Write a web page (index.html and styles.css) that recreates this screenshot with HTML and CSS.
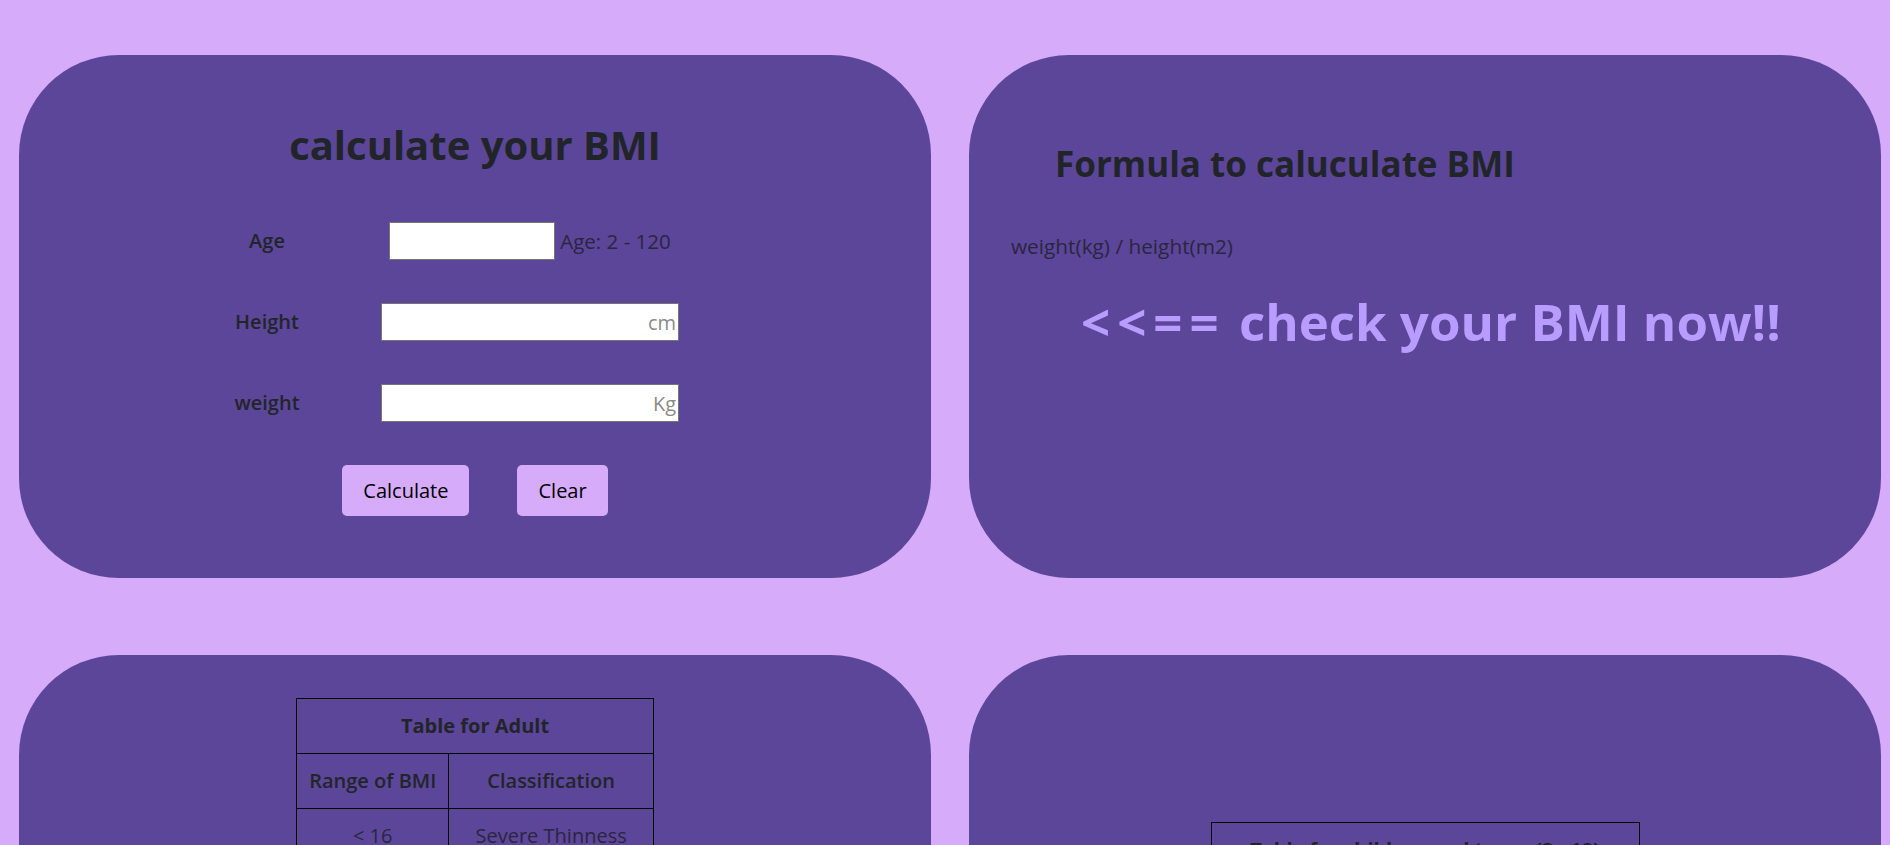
FILE: index.html
```html
<!DOCTYPE html>
<html lang="en">
<head>
<meta charset="utf-8">
<title>BMI Calculator</title>
<link rel="stylesheet" href="styles.css">
</head>
<body>
<main class="page">
  <section class="card calc-card">
    <h1 class="calc-title">calculate your BMI</h1>
    <form class="calc-form">
      <label class="field-label" for="age">Age</label>
      <div class="field">
        <input class="input input-age" id="age" type="text">
        <span class="hint">Age: 2 - 120</span>
      </div>
      <label class="field-label" for="height">Height</label>
      <div class="field">
        <input class="input input-wide" id="height" type="text" placeholder="cm">
      </div>
      <label class="field-label" for="weight">weight</label>
      <div class="field">
        <input class="input input-wide" id="weight" type="text" placeholder="Kg">
      </div>
    </form>
    <div class="actions">
      <button class="btn" type="button">Calculate</button>
      <button class="btn" type="button">Clear</button>
    </div>
  </section>

  <section class="card formula-card">
    <h2 class="formula-title">Formula to caluculate BMI</h2>
    <p class="formula-text">weight(kg) / height(m2)</p>
    <p class="cta"><span class="cta-arrow">&lt;&lt;==</span> check your BMI now!!</p>
  </section>

  <section class="card table-card adult-card">
    <table class="bmi-table">
      <thead>
        <tr><th colspan="2" class="table-caption">Table for Adult</th></tr>
        <tr><th>Range of BMI</th><th>Classification</th></tr>
      </thead>
      <tbody>
        <tr><td>&lt; 16</td><td>Severe Thinness</td></tr>
        <tr><td>16 - 17</td><td>Moderate Thinness</td></tr>
        <tr><td>17 - 18.5</td><td>Mild Thinness</td></tr>
        <tr><td>18.5 - 25</td><td>Normal</td></tr>
        <tr><td>25 - 30</td><td>Overweight</td></tr>
        <tr><td>30 - 35</td><td>Obese Class I</td></tr>
        <tr><td>35 - 40</td><td>Obese Class II</td></tr>
        <tr><td>&gt; 40</td><td>Obese Class III</td></tr>
      </tbody>
    </table>
  </section>

  <section class="card table-card child-card">
    <table class="bmi-table child-table">
      <thead>
        <tr><th colspan="2" class="table-caption">Table for children and teens (2 - 19)</th></tr>
        <tr><th>Category</th><th>Percentile Range</th></tr>
      </thead>
      <tbody>
        <tr><td>Underweight</td><td>&lt; 5%</td></tr>
        <tr><td>Healthy weight</td><td>5% - 85%</td></tr>
        <tr><td>At risk of overweight</td><td>85% - 95%</td></tr>
        <tr><td>Overweight</td><td>&gt; 95%</td></tr>
      </tbody>
    </table>
  </section>
</main>
</body>
</html>
```

FILE: styles.css
```css
* { box-sizing: border-box; }

html, body {
  margin: 0;
  background: #d5abfa;
  color: #212529;
  font-family: "Open Sans", "Noto Sans", sans-serif;
}

.page {
  display: grid;
  grid-template-columns: 912px 912px;
  column-gap: 38px;
  row-gap: 77px;
  padding: 55px 0 40px 19px;
}

.card {
  background: #5c4699;
  border-radius: 100px;
}

/* calculator card */
.calc-card {
  height: 523px;
  padding-top: 66px;
  display: flex;
  flex-direction: column;
  align-items: center;
}

.calc-title {
  margin: 0;
  font-size: 40px;
  line-height: 48px;
  font-weight: 700;
}

.calc-form {
  margin-top: 53px;
  display: grid;
  grid-template-columns: 110px 416px;
  row-gap: 43px;
  align-items: center;
}

.field-label {
  text-align: center;
  font-size: 20px;
  font-weight: 600;
  line-height: 30px;
}

.field {
  display: flex;
  justify-content: center;
  align-items: center;
  gap: 5px;
  height: 38px;
}

.input {
  height: 38px;
  border: 1px solid #767676;
  background: #fff;
  font-family: inherit;
  font-size: 20px;
  padding: 0 2px;
  text-align: right;
  border-radius: 0;
}

.input::placeholder { color: #8a8a8a; }

.input-age { width: 166px; }
.input-wide { width: 298px; }

.hint {
  font-size: 20.5px;
  line-height: 30px;
  color: #2a2540;
}

.actions {
  margin-top: 43px;
  display: flex;
  gap: 48px;
}

.btn {
  height: 51px;
  padding: 0 21px;
  border: none;
  border-radius: 5px;
  background: #d5abfa;
  color: #000;
  font-family: inherit;
  font-size: 20px;
  font-weight: 500;
}

/* formula card */
.formula-card {
  height: 523px;
  padding-top: 88px;
  padding-left: 42px;
}

.formula-title {
  margin: 0 0 0 44px;
  font-size: 35px;
  line-height: 42px;
  font-weight: 700;
}

.formula-text {
  margin: 47px 0 0;
  font-size: 20.8px;
  line-height: 28px;
  color: #2a2540;
}

.cta {
  margin: 30px 0 0 70px;
  font-size: 51px;
  line-height: 62px;
  font-weight: 700;
  color: #b99cff;
}

.cta-arrow { letter-spacing: 7px; }

/* table cards */
.table-card {
  display: flex;
  justify-content: center;
  align-items: flex-start;
  padding-bottom: 60px;
}

.adult-card { padding-top: 43px; }
.child-card { padding-top: 167px; }

.bmi-table {
  border-collapse: collapse;
  font-size: 20px;
  line-height: 30px;
  color: #212529;
}

.child-table { width: 429px; }

.bmi-table th,
.bmi-table td {
  border: 1px solid #000;
  padding: 12px 12px;
  text-align: center;
}

.bmi-table th { font-weight: 600; }
.bmi-table .table-caption { font-weight: 700; }
.bmi-table td { color: #2a2540; }
```
